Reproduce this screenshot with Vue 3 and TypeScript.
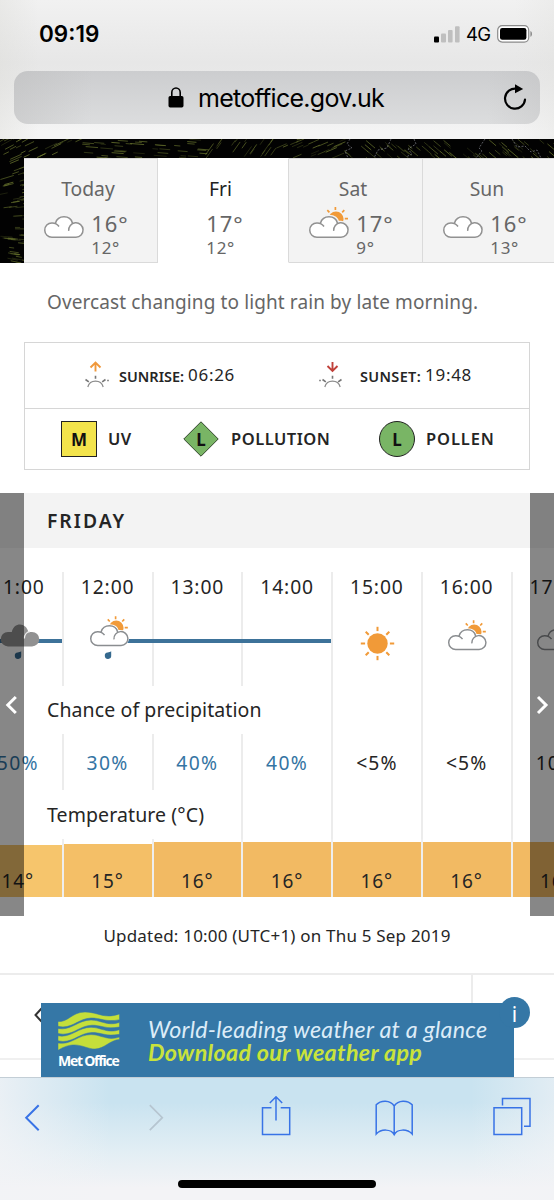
<script setup lang="ts">
interface DayTab { name: string; high: string; low: string; icon: 'cloud' | 'sunny' | 'none'; active?: boolean }
interface Hour { time: string; icon: 'dark' | 'sunny' | 'sun' | 'cloud' | 'none'; drop?: boolean; line?: 'full' | 'right'; rain: string; wet: boolean; temp: string; height: number; color: string }

const tabs: DayTab[] = [
  { name: 'Today', high: '16°', low: '12°', icon: 'cloud' },
  { name: 'Fri', high: '17°', low: '12°', icon: 'none', active: true },
  { name: 'Sat', high: '17°', low: '9°', icon: 'sunny' },
  { name: 'Sun', high: '16°', low: '13°', icon: 'cloud' },
]

const hours: Hour[] = [
  { time: '11:00', icon: 'dark', drop: true, line: 'full', rain: '50%', wet: true, temp: '14°', height: 52, color: '#f6c56c' },
  { time: '12:00', icon: 'sunny', drop: true, line: 'right', rain: '30%', wet: true, temp: '15°', height: 53, color: '#f4bf67' },
  { time: '13:00', icon: 'none', line: 'full', rain: '40%', wet: true, temp: '16°', height: 55, color: '#f2ba63' },
  { time: '14:00', icon: 'none', line: 'full', rain: '40%', wet: true, temp: '16°', height: 55, color: '#f2ba63' },
  { time: '15:00', icon: 'sun', rain: '<5%', wet: false, temp: '16°', height: 55, color: '#f2ba63' },
  { time: '16:00', icon: 'sunny', rain: '<5%', wet: false, temp: '16°', height: 55, color: '#f2ba63' },
  { time: '17:00', icon: 'cloud', rain: '10%', wet: false, temp: '16°', height: 55, color: '#f2ba63' },
]

const rays = [0, 45, 90, 135, 180, 225, 270, 315]

// Deterministic wind streaks for the dark map behind the day tabs.
let seed = 11
const rand = (): number => {
  seed = (seed * 16807) % 2147483647
  return seed / 2147483647
}
const streaks = Array.from({ length: 250 }, (_, i) => {
  const side = i < 75
  const x = rand() * (side ? 26 : 554)
  const y = rand() * (side ? 124 : 20)
  const flow = side ? -0.55 + y / 160 : x < 80 ? -0.45 : x < 200 ? 0.08 : x < 275 ? -0.95 : x < 340 ? -0.4 : 0.7
  const len = 5 + rand() * 9
  return { x1: x, y1: y, x2: x + Math.cos(flow) * len, y2: y + Math.sin(flow) * len, o: 0.25 + rand() * 0.6 }
})
</script>

<template>
  <div class="phone">
    <header class="chrome">
      <div class="status">
        <span class="clock">09:19</span>
        <div class="signals">
          <svg width="26" height="17" viewBox="0 0 26 17">
            <rect x="0" y="10.5" width="5" height="6" rx="1" fill="#000" />
            <rect x="7" y="7.5" width="5" height="9" rx="1" fill="#bfbfbf" />
            <rect x="14" y="4" width="4.6" height="12.5" rx="1" fill="#bfbfbf" />
            <rect x="21" y="0.2" width="4.6" height="16.3" rx="1" fill="#bfbfbf" />
          </svg>
          <span class="net">4G</span>
          <svg width="36" height="18" viewBox="0 0 36 18">
            <rect x="0.7" y="0.7" width="31" height="16.4" rx="4.5" fill="#fff" stroke="#8b8b8b" stroke-width="1.2" />
            <rect x="3" y="3" width="26.4" height="11.8" rx="2.2" fill="#000" />
            <path d="M33.5 6c1.8.6 1.8 5.200 0 5.800z" fill="#777" />
          </svg>
        </div>
      </div>
      <div class="address">
        <svg class="lock" width="16" height="21" viewBox="0 0 16 21">
          <path d="M3.800 10V5.500a4.200 4.500 0 0 1 8.400 0V10" fill="none" stroke="#000" stroke-width="1.600" />
          <rect x="0.500" y="9" width="15" height="11.500" rx="1.700" />
        </svg>
        <span class="url">metoffice.gov.uk</span>
        <svg class="reload" width="24" height="27" viewBox="0 0 24 27">
          <path d="M13.500 4.800A10 10 0 1 0 22 15.500" fill="none" stroke="#000" stroke-width="2.200" stroke-linecap="round" />
          <path d="M12 .3L20.200 4.900L12 9.200z" />
        </svg>
      </div>
    </header>

    <section class="days">
      <svg class="map" width="554" height="124" viewBox="0 0 554 124">
        <line v-for="(s, i) in streaks" :key="i" :x1="s.x1" :y1="s.y1" :x2="s.x2" :y2="s.y2" stroke="#7c8a36" stroke-width="0.8" :stroke-opacity="s.o" />
        <path d="M350 0l-3 5 5 4-7 3 3 7M391 0l-4 9-9 2-4 8M414 0l2 5-8 5 4 5-6 3M485 0l-6 9 3 3-7 8M512 0l5 8 8-1 6 6 6-2 4 8" fill="none" stroke="#9a9ca6" stroke-width=".9" stroke-opacity=".65" stroke-dasharray="2 1.5" />
      </svg>
      <div class="tabs">
        <div v-for="t in tabs" :key="t.name" class="tab" :class="{ active: t.active }">
          <div class="tab-name">{{ t.name }}</div>
          <div class="tab-body">
            <svg v-if="t.icon !== 'none'" class="tab-icon" width="42" height="33" viewBox="-1 -10 42 33">
              <g v-if="t.icon === 'sunny'">
                <circle cx="27" cy="3" r="7.6" fill="#f19a38" />
                <path d="M26.4-9v3M18.3-5.8l2.1 2.2M35.3-5.8l-2.1 2.2M35.8 2.7h3.2" stroke="#f19a38" stroke-width="1.7" fill="none" />
                <path d="M8 21a7 7 0 0 1 0-14h3.500C12.500 3 16 1 20 1s7.500 2 8.300 6H32a7 7 0 0 1 0 14z" fill="#fff" stroke="#f3f3f3" stroke-width="4.500" />
              </g>
              <path d="M8 21a7 7 0 0 1 0-14h3.500C12.500 3 16 1 20 1s7.500 2 8.300 6H32a7 7 0 0 1 0 14z" fill="#fff" />
              <path d="M15 10.500C13.200 7.900 10.600 6.800 7.800 6.900A7.150 7.150 0 0 0 8 21.200H32A7.200 7.200 0 1 0 24.700 14.800M11.500 7C12.700 3 16 .8 20 .8S27.400 3 28.400 7" fill="none" stroke="#919191" stroke-width="1.500" />
            </svg>
            <div class="temps">
              <div class="high">{{ t.high }}</div>
              <div class="low">{{ t.low }}</div>
            </div>
          </div>
        </div>
      </div>
    </section>

    <p class="summary">Overcast changing to light rain by late morning.</p>

    <section class="facts">
      <div class="row sunrow">
        <div class="fact">
          <svg width="26" height="28" viewBox="0 0 26 28">
            <path d="M12.500 10.500V2M7.500 6.500L12.500 1.600l5 4.900" fill="none" stroke="#f0983b" stroke-width="1.900" />
            <path d="M4.800 26a8 8 0 0 1 15.400 0" fill="none" stroke="#8b8b8b" stroke-width="1.200" />
            <path d="M12.500 14.700v3M2.500 18.500l3.300 2.400M22.500 18.500l-3.300 2.400M25 18.800v1.500" stroke="#777" stroke-width="1.600" />
          </svg>
          <b>SUNRISE:</b><span>06:26</span>
        </div>
        <div class="fact second">
          <svg width="26" height="28" viewBox="0 0 26 28">
            <path d="M13.500 1v8.500M8.500 5l5 4.900 5-4.900" fill="none" stroke="#c0403a" stroke-width="1.900" />
            <path d="M5.800 26a8 8 0 0 1 15.400 0" fill="none" stroke="#8b8b8b" stroke-width="1.200" />
            <path d="M13.500 14.700v3M3.500 18.500l3.300 2.400M22.500 18.500l-3.300 2.400M1 18.800v1.500" stroke="#777" stroke-width="1.600" />
          </svg>
          <b>SUNSET:</b><span>19:48</span>
        </div>
      </div>
      <div class="row indexrow">
        <div class="badge square">M</div><span class="idx uv">UV</span>
        <div class="diamond">
          <svg width="36" height="36" viewBox="0 0 36 36"><path d="M18 .8L35.200 18 18 35.200.8 18z" fill="#79b565" stroke="#33482d" stroke-width="1" /></svg>
          <span>L</span>
        </div>
        <span class="idx pollution">POLLUTION</span>
        <div class="badge round">L</div><span class="idx pollen">POLLEN</span>
      </div>
    </section>

    <section class="forecast">
      <h2>FRIDAY</h2>
      <div class="strip times">
        <div v-for="h in hours" :key="h.time" class="cell">
          <div class="time">{{ h.time }}</div>
          <div class="weather">
            <div v-if="h.line" class="rainline" :class="h.line" />
            <svg class="hour-icon" width="42" height="54" viewBox="-1 -10 42 54">
              <g v-if="h.icon === 'sunny' || h.icon === 'cloud'" :transform="h.drop ? 'scale(.97)' : 'translate(-1 4) scale(.97)'">
                <g v-if="h.icon === 'sunny'">
                  <circle cx="27" cy="3" r="7.600" fill="#f19a38" />
                  <path d="M26.400-9v3M18.300-5.800l2.100 2.200M35.300-5.800l-2.100 2.200M35.800 2.700h3.200" stroke="#f19a38" stroke-width="1.700" fill="none" />
                </g>
                <path d="M8 20a6.500 6.500 0 0 1 0-13h3.500C12.500 3 16 1 20 1s7.500 2 8.300 6H32a6.500 6.500 0 0 1 0 13z" fill="#fff" stroke="#fff" stroke-width="3.600" />
                <path d="M15 10.500C13.200 7.900 10.600 6.800 7.800 6.900A7.150 7.150 0 0 0 8 21.200H32A7.200 7.200 0 1 0 24.700 14.800M11.500 7C12.700 3 16 .8 20 .8S27.400 3 28.400 7" fill="none" stroke="#8a8d90" stroke-width="1.500" />
              </g>
              <g v-else-if="h.icon === 'dark'" transform="translate(.5 0)">
                <path d="M7.500 21.500a7.300 7.300 0 0 1 0-14.600h3.800C12.300 2 15.800-.5 19.500-.5S27 2.500 27.800 6.900h3.700a7.300 7.300 0 0 1 0 14.600z" fill="#919191" />
                <path d="M23.800 13.500C24 9.500 26.500 6.700 29.500 6.500" fill="none" stroke="#eee" stroke-width="1.300" />
              </g>
              <g v-else-if="h.icon === 'sun'" transform="translate(18.500 18.500)">
                <circle r="10.200" fill="#f19a38" />
                <path v-for="r in rays" :key="r" d="M0-16.700v4.300" :transform="`rotate(${r})`" stroke="#f19a38" stroke-width="2" />
              </g>
              <path v-if="h.drop" d="M21.200 26.300v4.200a3.200 3.200 0 1 1-3.500-3c1.500-.2 2.500-.5 3.500-1.200z" fill="#35698e" />
            </svg>
          </div>
        </div>
      </div>
      <div class="strip label-strip">
        <div v-for="h in hours" :key="h.time" class="cell" />
        <h3 class="rain-label">Chance of precipitation</h3>
      </div>
      <div class="strip rain">
        <div v-for="h in hours" :key="h.time" class="cell" :class="{ wet: h.wet }">{{ h.rain }}</div>
      </div>
      <div class="strip label-strip second-label">
        <div v-for="h in hours" :key="h.time" class="cell" />
        <h3 class="temp-label">Temperature (°C)</h3>
      </div>
      <div class="strip heat">
        <div v-for="h in hours" :key="h.time" class="cell">
          <div class="bar" :style="{ height: h.height + 'px', background: h.color }">{{ h.temp }}</div>
        </div>
      </div>
      <button class="shade prev"><svg width="24" height="24" viewBox="0 0 24 24"><path d="M15.800 4L7.800 12l8 8" fill="none" stroke="#fff" stroke-width="3" /></svg></button>
      <button class="shade next"><svg width="24" height="24" viewBox="0 0 24 24"><path d="M8 4L16 12l-8 8" fill="none" stroke="#fff" stroke-width="3" /></svg></button>
    </section>

    <p class="updated">Updated: 10:00 (UTC+1) on Thu 5 Sep 2019</p>

    <section class="below">
      <div class="below-left" />
      <div class="below-right" />
      <svg class="tiny" width="8" height="16" viewBox="0 0 8 16"><path d="M7.500 1.500L1.500 8l6 6.500" fill="none" stroke="#333" stroke-width="2" /></svg>
      <div class="banner">
        <div class="brand">
          <svg width="62" height="40" viewBox="0 0 62 40">
            <g fill="#c5df3a" stroke="#3577a6" stroke-width=".5">
              <path d="M0 9.500C10 10.500 14 0 27 0C40 0 46 7.500 61.500 2V7.700C48 10.500 42 5.700 33 6C20 6.500 14 17.500 0 14.300z" />
              <path d="M0 16.500C13 19 20 8 33 8c10 0 16 6.500 28.500 2.500v4.500C48 17.500 43 13 34 13.200C21 13.500 14 25 0 21.500z" />
              <path d="M0 23.800C13 26.300 20 15.300 33 15.300c10 0 16 6.500 28.500 2.500v4.500C48 24.800 43 20.300 34 20.500C21 20.800 14 32.300 0 28.800z" />
              <path d="M0 31C13 33.500 20 22.600 33 22.600c10 0 16 6.500 28.500 2.500V27.500C52 28 46 37 37 37C26 37 18 27 0 38.300z" />
            </g>
          </svg>
          <span>Met Office</span>
        </div>
        <div class="pitch">
          <span class="lead">World-leading weather at a glance</span>
          <span class="cta">Download our weather app</span>
        </div>
      </div>
      <div class="info">i</div>
    </section>

    <footer class="toolbar">
      <svg width="554" height="123" viewBox="0 1078 554 123" fill="none" stroke="#3873e6" stroke-width="1.500">
        <path d="M38.700 1105.200L26.200 1117.700l12.500 12.500" stroke-width="2" />
        <path d="M149.800 1105.200l12.500 12.500-12.500 12.500" stroke="#b6c5d0" stroke-width="1.700" />
        <path d="M271.500 1107.800H262.500v26.700h27.200v-26.700h-9M276 1120.500v-23.500M269.800 1103l6.200-6.200 6.200 6.200" />
        <path d="M394.200 1106c-4-6.300-13.500-6-18 -1.200v29.300c5-5.500 15-5.300 18 .6 3-5.900 13-6.100 18-.6v-29.300c-4.500-4.800-14-5.100-18 1.200zv28.500" />
        <path d="M494 1107.700h27.700v26.800H494zM502.500 1105.500v-7h27.500v27.800h-6" />
      </svg>
      <div class="home" />
    </footer>
  </div>
</template>

<style>
body { margin: 0; background: #fff; }
</style>

<style scoped>
* { box-sizing: border-box; }
.phone { width: 554px; height: 1200px; overflow: hidden; background: #fff; color: #252525; font-family: "Noto Sans", "Open Sans", sans-serif; display: flex; flex-direction: column; }
svg { display: block; flex: none; }
.chrome { height: 139px; flex: none; background: linear-gradient(90deg, rgba(218,218,213,.35), rgba(218,218,213,0) 7%, rgba(225,225,222,0) 93%, rgba(225,225,222,.3)), linear-gradient(#f1f1f1, #e7e7e7 45%, #e9e9e9 60%, #f4f4f4 95%); font-family: Inter, sans-serif; color: #000; padding: 0 14px; }
.status { height: 71px; display: flex; justify-content: space-between; align-items: flex-start; padding: 18px 7px 0 25px; }
.clock { font-size: 22.500px; font-weight: 600; line-height: 32px; letter-spacing: 0; }
.signals { display: flex; align-items: center; height: 18px; margin: 7px 0 0; }
.net { font-size: 18.500px; line-height: 18px; width: 37px; padding-left: 6px; letter-spacing: -.8px; white-space: nowrap; }
.address { height: 53px; border-radius: 14px; background: linear-gradient(90deg, rgba(185,185,185,.4), rgba(185,185,185,0) 15%, rgba(190,190,190,0) 90%, rgba(190,190,190,.3)), linear-gradient(#cccdcf, #dcddde); display: flex; align-items: center; padding: 0 13px 0 154px; }
.lock { margin-right: 14px; }
.url { font-size: 25px; line-height: 30px; letter-spacing: -.72px; flex: 1; }
.days { height: 124px; flex: none; position: relative; background: #020202; }
.map { position: absolute; left: 0; top: 0; }
.tabs { position: relative; display: flex; margin-left: 24px; padding-top: 19px; height: 125px; }
.tab { width: 134px; flex: none; height: 105px; background: #f3f3f3; border: 1px solid #dadada; border-left: 0; color: #666; padding-top: 17px; }
.tab.active { background: #fff; border-color: #fff; border-right-color: #dadada; width: 131px; }
.tab.active .tab-name { color: #222; }
.tab-name { text-align: center; font-size: 19.300px; line-height: 26px; padding-right: 5px; }
.tab-body { display: flex; justify-content: center; padding-right: 9px; margin-top: 4px; }
.active .tab-body { padding: 0 0 0 4px; }
.tab-icon { margin: 0 6px 0 0; }
.temps { text-align: left; }
.high { font-size: 22px; line-height: 25px; letter-spacing: .9px; margin-top: 5px; }
.low { font-size: 17px; line-height: 23px; letter-spacing: .6px; }
.summary { margin: 0; height: 79px; flex: none; padding: 25px 0 0 47px; font-size: 19px; line-height: 28px; letter-spacing: .11px; color: #666; white-space: nowrap; }
.facts { margin: 0 24px; height: 128px; flex: none; border: 1px solid #d6d6d6; display: flex; flex-direction: column; }
.row { display: flex; align-items: center; }
.sunrow { height: 66px; border-bottom: 1px solid #d6d6d6; padding-left: 58px; }
.fact { display: flex; align-items: center; width: 236px; flex: none; white-space: nowrap; line-height: 24px; padding-bottom: 1px; }
.fact b { font-size: 14.500px; font-weight: 600; margin: 1px 4px 0 10px; }
.fact.second b { margin-left: 15px; letter-spacing: .35px; }
.fact.second { width: 190px; }
.fact span { font-size: 17px; letter-spacing: .7px; }
.indexrow { flex: 1; padding-left: 36px; font-weight: 600; }
.badge { width: 36px; height: 36px; border: 1px solid #222; display: grid; place-items: center; font-size: 17px; line-height: 22px; font-weight: 700; color: #111; padding-top: 1px; flex: none; }
.square { background: #f3e44c; }
.round { border-radius: 50%; background: #79b565; }
.diamond { position: relative; width: 36px; flex: none; }
.diamond span { position: absolute; inset: 0; display: grid; place-items: center; font-size: 17px; font-weight: 700; color: #111; }
.idx { font-size: 16.500px; letter-spacing: .5px; line-height: 22px; padding-bottom: 1px; flex: none; }
.uv { width: 86px; padding-left: 11px; }
.pollution { width: 160px; padding-left: 12px; }
.pollen { padding-left: 11px; letter-spacing: .9px; }
.forecast { position: relative; margin-top: 23px; height: 423px; flex: none; overflow: hidden; }
h2 { margin: 0 0 24px; height: 55px; background: #f3f3f3; padding-left: 47px; font-size: 19.300px; font-weight: 600; letter-spacing: 2px; line-height: 56px; }
.strip { display: flex; margin-left: -28px; width: 640px; position: relative; }
.cell { width: 89.750px; flex: none; border-left: 2px solid #ececec; text-align: center; }
.times .cell { height: 114px; }
.time { font-size: 19.300px; line-height: 30px; letter-spacing: .9px; }
.weather { position: relative; display: flex; justify-content: center; padding-top: 13px; }
.rainline { position: absolute; top: 37px; left: -2px; right: 0; height: 4px; background: #3d7299; }
.rainline.right { left: 50%; }
.hour-icon { position: relative; margin-left: 4px; }
.label-strip .cell { height: 48px; }
.label-strip.second-label .cell { height: 49px; }
h3 { position: absolute; left: 28px; top: 0; height: 100%; margin: 0; padding-left: 47px; background: #fff; font-weight: 400; font-size: 19.500px; line-height: 48px; letter-spacing: .1px; white-space: nowrap; }
.rain-label { width: 290px; }
.temp-label { width: 212px; line-height: 49px; }
.rain .cell { height: 56px; line-height: 57px; font-size: 19.300px; letter-spacing: 1px; }
.rain .wet { color: #3474a3; letter-spacing: 1.400px; }
.heat .cell { height: 58px; display: flex; align-items: flex-end; border-color: #eee; }
.bar { width: 100%; display: flex; align-items: flex-end; justify-content: center; font-size: 19px; line-height: 32px; letter-spacing: .9px; }
.shade { position: absolute; top: 0; bottom: 0; width: 24px; padding: 0; border: 0; background: rgba(0,0,0,.47); display: flex; align-items: center; }
.prev { left: 0; }
.next { right: 0; }
.updated { margin: 0; height: 57px; flex: none; text-align: center; font-size: 17px; line-height: 39px; letter-spacing: .2px; white-space: nowrap; }
.below { position: relative; height: 104px; flex: none; border-top: 2px solid #ececec; }
.below-left { position: absolute; left: 0; right: 81px; height: 85px; border-right: 2px solid #ececec; border-bottom: 2px solid #f0f0f0; }
.below-right { position: absolute; right: 0; width: 81px; height: 85px; border-bottom: 2px solid #f0f0f0; }
.tiny { position: absolute; left: 34px; top: 31.500px; }
.banner { position: absolute; left: 41px; top: 28px; width: 473px; height: 74px; background: #3577a6; display: flex; }
.brand { width: 107px; padding: 9px 0 0 17px; color: #fff; font: 700 14px/18px "Open Sans", sans-serif; letter-spacing: -1.250px; white-space: nowrap; }
.pitch { display: flex; flex-direction: column; font-family: Lato, sans-serif; font-style: italic; white-space: nowrap; padding-top: 14px; }
.lead { font-size: 23.300px; line-height: 24px; letter-spacing: .24px; color: #dcecf8; font-weight: 400; }
.cta { font-size: 23.300px; line-height: 23px; letter-spacing: .32px; color: #c9e33b; font-weight: 700; }
.info { position: absolute; left: 499px; top: 22px; width: 31px; height: 31px; border-radius: 50%; background: #3577a6; color: #fff; display: grid; place-items: center; font-size: 21px; line-height: 1; padding-top: 3px; }
.toolbar { position: relative; height: 123px; flex: none; border-top: 1px solid #c3ced6; background: linear-gradient(90deg, rgba(242,243,246,.8), rgba(242,243,246,0) 20%, rgba(242,243,246,0) 85%, rgba(242,243,246,.6)), linear-gradient(#c9e3f0 20%, #e2eef4 60%, #f3f3f6 90%); }
.home { position: absolute; left: 178px; top: 102px; width: 198px; height: 8px; border-radius: 4px; background: #000; }
</style>
